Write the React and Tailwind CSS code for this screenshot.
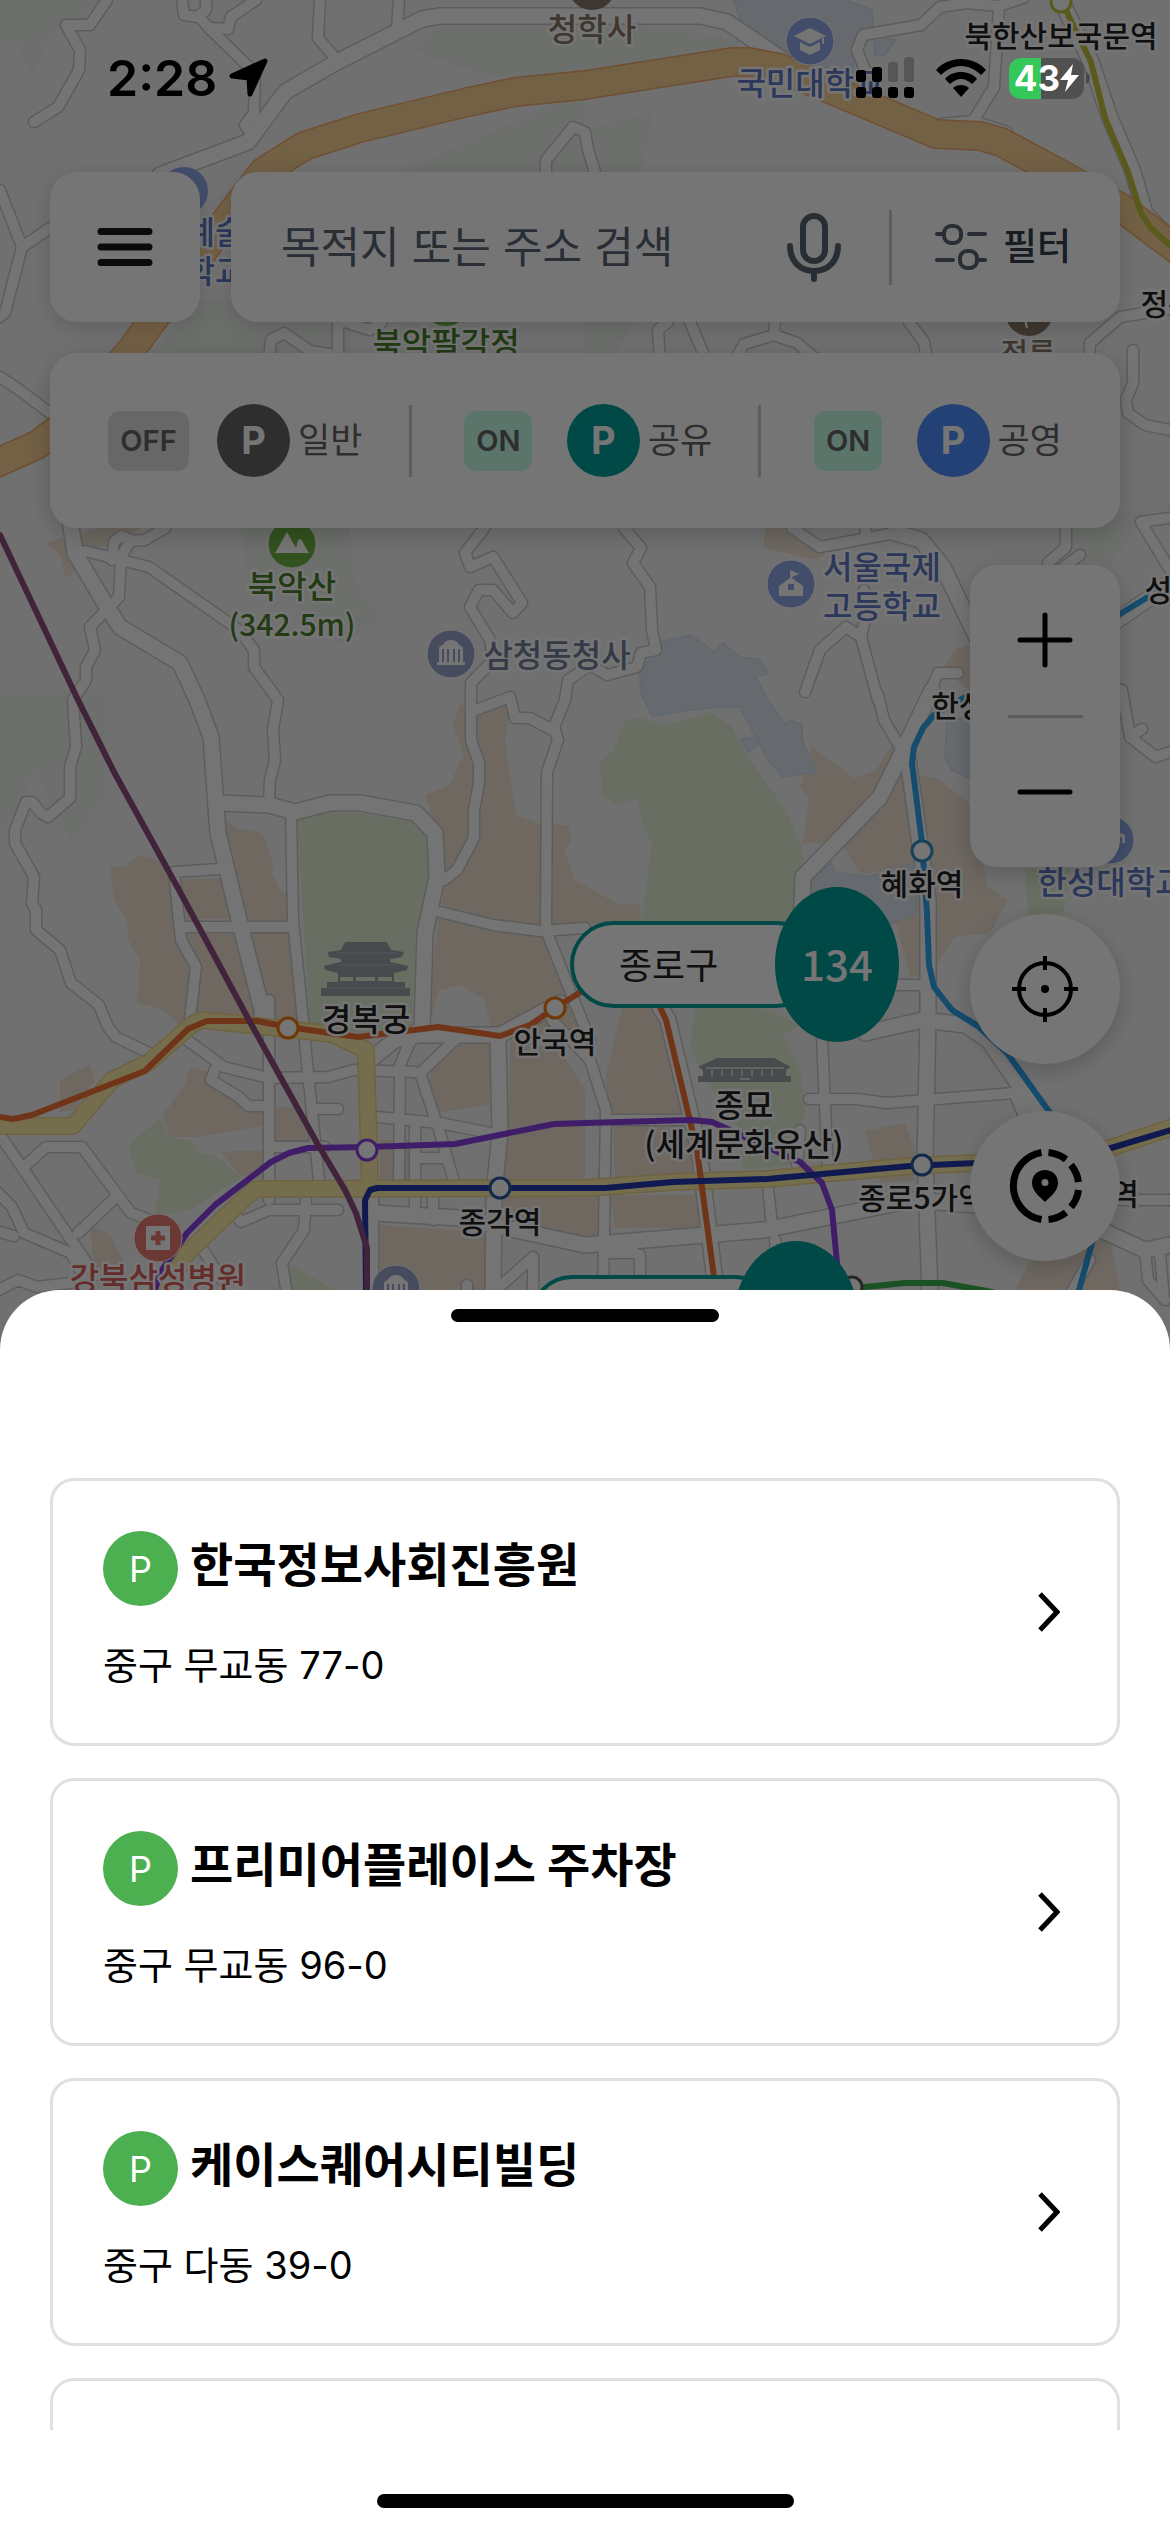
import React from "react";

const LATIN = "font-[Inter,'Noto_Sans_CJK_KR',sans-serif]";

/* ---------- map data ---------- */

const hills = [
  "M0 0H100L70 25L48 35L42 60L30 75L15 40L0 50Z",
  "M440 25L585 18L740 40L730 75L560 90L470 70L410 50Z",
  "M0 690H105V800L72 842L55 820L36 770L0 840Z",
  "M240 528H350L352 570L368 600L383 608L380 620L340 645L290 600L250 590Z",
  "M1100 511H1148L1110 565L1090 560L1066 528Z",
  "M200 300H350V353H150Z",
  "M360 190L585 90V130L655 110L640 172H500L470 353H400Z",
  "M585 322H635L615 353H585Z",
];

const beige = [
  "M45 543L100 528H140L120 545L90 548L78 570L65 578L60 555Z",
  "M765 528L800 528L825 555L815 560L795 555L763 548Z",
  "M970 645L955 650L943 670L970 690Z",
  "M110 867L125 866L139 855L165 862L174 872L196 967L190 1020L165 1010L137 1003L140 960L128 940L127 920L114 900Z",
  "M180 879L224 878L232 918L186 920Z",
  "M224 815L235 828L262 833L274 865L272 872L280 890L291 895L303 1030L262 1020L240 920Z",
  "M188 934L233 934L258 1020L198 1020L200 970Z",
  "M462 700L453 725L463 755L450 785L425 795L430 808L437 850V912L493 925L541 931L571 1000L580 1030L493 1040L485 1000L460 985L440 990L425 1035L440 905L442 880L474 838L479 780L470 740Z",
  "M476 712L510 705L505 740L516 815L541 824L541 930L493 922L442 905L445 882L474 840L480 770Z",
  "M552 824L568 826L572 838L565 850L575 880L620 905L640 903L641 923H590L546 932Z",
  "M812 747L854 778L876 770L893 743L902 773L936 778L969 803L988 887L1008 900L990 933L954 937L940 960L930 975L910 977L895 920L917 910L913 865L860 875L842 843H803L809 797L800 787Z",
  "M60 1080L90 1064L95 1080L75 1110L60 1112Z",
  "M150 1000H260V1025H205L185 1030Z",
  "M190 1067L215 1073L213 1083L245 1108L265 1110V1125L200 1137H170L163 1115L185 1083Z",
  "M276 1107H300L310 1145H276Z",
  "M220 1152L263 1150V1180L240 1175Z",
  "M445 1035L490 1037V1105L440 1112L428 1080Z",
  "M510 1040L560 1050L585 1090V1240L505 1215L500 1190L508 1130Z",
  "M380 1140H410V1180H380Z",
  "M622 1008H655L697 1150V1180H615L613 1120L605 1080Z",
  "M610 1195H695L700 1228H615Z",
  "M380 1225L490 1233V1290H380Z",
  "M585 1195H600V1235H585Z",
  "M865 1131L905 1123L915 1150V1180L880 1183Z",
  "M1085 1240L1110 1240L1120 1290H1015L1030 1262Z",
  "M90 1225L110 1235L125 1265L95 1275Z",
];

const greens = [
  "M297 818L330 813H362L414 822L427 837L429 880L416 933L412 1035L310 1030Z",
  "M600 763L613 750L626 720L641 718L667 725L710 712L732 727L745 753L786 810L803 850V925H641L652 843L643 827L637 798L617 805L602 795Z",
  "M695 1007H760L800 1025L783 1035L800 1070L806 1110L790 1165L742 1170L740 1130L712 1090L690 1050Z",
  "M128 1145L160 1118L170 1138L192 1140L197 1152L215 1155L241 1178L190 1210L155 1217L160 1180L136 1173Z",
  "M290 1264L335 1290H290Z",
  "M1025 868H1070L1063 918H1028Z",
];

const waters = [
  "M661 642L691 635L714 652L723 643L740 657L760 660L768 673L755 677L770 703L786 725L790 720L802 725V740L816 772L783 777L768 760L740 707H716L690 710L652 716L641 693L640 673Z",
  "M809 880L831 863L835 872L869 877L913 863L917 913L850 940L809 920Z",
  "M947 723L970 715V778L952 770L945 757Z",
  "M734 0L740 20L727 20L783 60L850 80L857 50L872 35L895 40L885 55H875L872 10L846 0Z",
  "M741 740L750 737L760 742L748 752Z",
];

const smallRoads = [
  "M107 0L90 25H66L80 50L79 70L58 107L34 122",
  "M182 0L184 15L197 17L206 10V0",
  "M256 0L231 17L228 29L209 28L199 17",
  "M209 28L255 73L254 113L245 125L252 135",
  "M320 0L318 38L337 60",
  "M399 0L397 28",
  "M0 190L22 247L50 228M22 247L5 313L-5 320",
  "M546 172V160L573 127L585 132L588 150L595 172",
  "M338 322V355M269 360L271 340L284 333L310 351L335 355M345 322L370 330L382 322",
  "M865 70L857 50L863 35L921 25L940 7L966 3L999 6L1025 -3",
  "M999 8L994 87L973 121L940 124M973 121L1007 132",
  "M1175 308L1120 317L1090 343L1089 360",
  "M1133 350V383L1126 400L1128 413L1145 425L1170 430",
  "M660 360L658 330L668 322M690 322L706 360M775 322L774 335L744 344L735 360M774 335L797 343L815 358M909 322L924 342L927 360",
  "M0 377L18 389L50 413",
  "M85 551L149 567L239 630L254 650V667L278 700L273 730L275 760L270 780L269 803",
  "M165 528L145 540L131 541M119 597L121 557L131 540L121 536L114 542L112 560M119 597L90 627L95 650L86 667V680L73 700L76 747L70 767V798L48 817L41 813L32 802H26L15 830V843L34 877L32 903L36 910V930L60 950L71 983L99 1005L108 1027L116 1037L153 1055",
  "M485 527L465 553L470 567L493 557L522 603L513 613L493 590H479L470 607L490 640L493 660L471 683V740L479 763V783L474 810V838L457 870L444 880",
  "M624 528L641 548L633 563L650 587L652 630L656 650L641 653L637 667L607 675L590 665L568 680L565 700L554 727L558 740L547 772L546 930L571 993L590 1040",
  "M476 710L510 697L515 718H530L552 730",
  "M220 869L174 872L181 940L196 967L190 1018",
  "M183 927H291",
  "M440 912L493 925L541 931L585 928",
  "M291 812L293 920L303 1020L308 1073L319 1180",
  "M187 1040L224 1067L269 1078L328 1077L354 1070L415 1072",
  "M269 1000V1200",
  "M216 1067L211 1080L239 1097L248 1106H269M313 1109H338M274 1147H325",
  "M0 1135L95 1275M26 1165L46 1147H82L131 1213L150 1220M116 1197L78 1233",
  "M-5 1190L12 1207L24 1233L71 1253L85 1280M0 1232L14 1236M-5 1292L18 1280L37 1287L70 1283",
  "M234 1213L241 1222L269 1210H338M306 1200L304 1230L282 1263L287 1295M200 1245L222 1280",
  "M415 1030L400 1065L399 1185M460 1035L420 1073L440 1133L455 1185M377 1117L440 1123L500 1135",
  "M415 1128V1215M420 1158H446M433 1190V1220",
  "M373 1200V1295M496 1290L533 1257V1295M467 1295V1285",
  "M552 1020L590 1060L606 1110L603 1295M613 1120H686",
  "M822 1037L828 1175M809 1099H857L887 1103L1014 1093L1028 1125M800 1130L797 1165",
  "M768 1187L772 1227M775 1240L778 1290M640 1255V1290M606 1253H635",
  "M878 695L884 720L900 747M792 528L820 547L895 533M865 528L867 538",
  "M805 692L820 650L846 627L861 637L878 700M861 637L866 615L864 590",
  "M928 697L938 673H958M1066 528V547L1048 563M1080 555L1060 570",
  "M1175 517L1141 522L1170 570M1122 690L1130 737L1156 757L1175 750M1130 737L1142 729",
  "M895 985H922M1145 1250L1148 1280L1165 1300M1120 1200H1175M1160 1255L1164 1298",
  "M1090 1260L1070 1295",
];

const bigRoads = [
  "M160 175L248 142L285 92L335 63L422 19L440 16H700L727 22L783 60",
  "M70 520L75 553L107 607L120 627L180 663L197 700L211 737L216 807L218 833L239 920L262 1010V1020",
  "M220 803L269 805L295 812L330 803H360L416 813L435 833L437 877L425 933L422 1030",
  "M895 533L921 540L943 567L978 640",
  "M932 690L902 753L880 797L803 877L801 930",
  "M908 760L928 900V1020L925 1157L930 1295",
  "M865 1033L923 1020L966 1025L988 1040L1050 1130",
  "M498 1037L500 1133L494 1193L493 1295",
  "M370 1060L395 1040L420 1035H500L560 1003",
  "M373 1213L460 1218L585 1245L645 1240L764 1230L913 1200L975 1205",
  "M1090 1225L1145 1250L1175 1244",
  "M1061 0L1091 62L1110 118L1133 172L1145 213L1170 240",
  "M1115 622L1175 580",
  "M660 1007L668 1020L699 1150L716 1290",
];

const highway =
  "M-10 466L37 445L60 428L129 353L215 235L263 172L304 146L360 128L468 102L515 92L585 85L732 62L749 62L780 68L794 74L936 134L980 136L1001 142L1057 172L1120 207L1180 252";

const yellowRoads = [
  "M-5 1126H73L112 1080L149 1062L194 1023L203 1020L332 1034L366 1050L370 1187",
  "M160 1300L187 1253L246 1197L256 1189L585 1188L673 1182L767 1179L910 1166L976 1163L1111 1148L1175 1126",
];

const subways = [
  { d: "M0 1117L13 1119L32 1115L145 1071L188 1029L207 1021H257L288 1027L358 1037L438 1027L500 1036L530 1025L555 1008L600 980L640 975L660 1007L666 1020L697 1150L714 1277", c: "#f57537" },
  { d: "M155 1290L160 1273L187 1233L215 1205L271 1162L289 1153L308 1148L368 1147L455 1144L554 1124L585 1123L691 1120L712 1122L800 1162L822 1183L832 1210L837 1263V1290", c: "#8a41e4" },
  { d: "M366 1290L365 1200L370 1190L377 1188H605L673 1182L767 1179L910 1166L976 1163L1111 1148L1175 1129", c: "#2539ae" },
  { d: "M1175 580L1148 597L1120 614L960 700L934 715L923 728L914 747L912 763L922 843L927 913L929 965L934 987L952 1010L979 1027L1007 1053L1048 1110L1100 1180L1092 1243L1079 1290", c: "#30a5ee" },
  { d: "M1061 0L1091 62L1105 118L1128 172L1141 213L1150 227L1175 250", c: "#c6c440" },
  { d: "M865 1287L905 1283H943L992 1292", c: "#3bb24c" },
  { d: "M0 535L78 700L114 772L179 890L250 1022L317 1143L345 1190L356 1213L367 1248V1290", c: "#8f4e82" },
];

const stations = [
  [288, 1028, "#f57a10"],
  [555, 1008, "#f57a10"],
  [367, 1150, "#8a41e4"],
  [500, 1188, "#2a5aa5"],
  [922, 1165, "#2a5aa5"],
  [922, 851, "#2f8fc8"],
  [1061, 2, "#c6c440"],
  [852, 1287, "#555555"],
];

const BLUE = "#5f7bc6";
const GREEN = "#4a822d";
const BLACK = "#222222";
const BROWN = "#877868";

/* name (one entry per line), x, y of the first line, colour, size */
const labels = [
  [["청학사"], 592, 27, BROWN, 32],
  [["국민대학교"], 810, 81, BLUE, 32],
  [["북한산보국문역"], 1061, 34, BLACK, 30],
  [["예술", "학교"], 215, 230, BLUE, 32],
  [["북악팔각정"], 446, 341, GREEN, 32],
  [["정릉"], 1028, 351, BROWN, 30],
  [["정릉"], 1168, 302, BLACK, 30],
  [["북악산"], 292, 584, GREEN, 32],
  [["(342.5m)"], 292, 623, GREEN, 30],
  [["삼청동청사"], 557, 653, "#757e9c", 32],
  [["서울국제", "고등학교"], 882, 565, BLUE, 32],
  [["성신"], 1172, 588, BLACK, 30],
  [["한성대입구역"], 1014, 704, BLACK, 30],
  [["혜화역"], 922, 882, BLACK, 30],
  [["한성대학교"], 1111, 880, BLUE, 32],
  [["경복궁"], 366, 1017, BLACK, 32],
  [["안국역"], 555, 1040, BLACK, 30],
  [["종묘", "(세계문화유산)"], 744, 1103, BLACK, 32],
  [["종각역"], 500, 1220, BLACK, 30],
  [["종로5가역"], 922, 1196, BLACK, 30],
  [["역"], 1125, 1192, BLACK, 30],
  [["강북삼성병원"], 158, 1276, "#d9625b", 32],
];

function Bank({ x, y }) {
  return (
    <g transform={`translate(${x} ${y})`}>
      <circle r="24" fill="#9aa7cc" stroke="#fff" strokeWidth="1" />
      <path fill="#fff" d="M-12 -5C-12 -9 -8 -8 -7 -11C-4 -15 4 -15 7 -11C8 -8 12 -9 12 -5V8H14V11H-14V8H-12Z" />
      <path stroke="#9aa7cc" strokeWidth="2" d="M-8 -5V8M-3 -5V8M3 -5V8M8 -5V8" />
    </g>
  );
}

function MapDrawing() {
  return (
    <svg
      className="absolute inset-0 h-full w-full"
      viewBox="0 0 1170 2532"
      preserveAspectRatio="xMidYMin slice"
      role="img"
      aria-label="지도"
    >
      <rect width="1170" height="2532" fill="#f5f5f5" />
      {hills.map((d) => <path key={d} d={d} fill="#ebf1e9" />)}
      {beige.map((d) => <path key={d} d={d} fill="#f0e2d4" />)}
      {greens.map((d) => <path key={d} d={d} fill="#e3f0d6" />)}
      {waters.map((d) => <path key={d} d={d} fill="#dfe8f0" stroke="#d5e1ee" strokeWidth="2" />)}
      <g fill="none" strokeLinejoin="round" strokeLinecap="round">
        <g stroke="#c9c9c9">
          {smallRoads.map((d) => <path key={d} d={d} strokeWidth="13" />)}
          {bigRoads.map((d) => <path key={d} d={d} strokeWidth="18" />)}
        </g>
        <g stroke="#fdfdfd">
          {smallRoads.map((d) => <path key={d} d={d} strokeWidth="10" />)}
          {bigRoads.map((d) => <path key={d} d={d} strokeWidth="15" />)}
        </g>
        <path d={highway} stroke="#f3ab6c" strokeWidth="30" />
        <path d={highway} stroke="#fad398" strokeWidth="27" />
        {yellowRoads.map((d) => <path key={d} d={d} stroke="#efd68c" strokeWidth="18" />)}
        {yellowRoads.map((d) => <path key={d} d={d} stroke="#fcedaa" strokeWidth="15" />)}
        {subways.map((s) => <path key={s.d} d={s.d} stroke={s.c} strokeWidth="6" />)}
      </g>
      {stations.map(([x, y, c]) => (
        <circle key={`${x}-${y}`} cx={x} cy={y} r="10" fill="#fff" stroke={c} strokeWidth="3" />
      ))}

      {/* palace */}
      <g fill="#9da1aa">
        <path d="M345 942H387L391 950L404 952L402 957L390 959V962L408 966L407 970L394 973V982H405V988H410V996H321V988H327V982H338V973L325 970L324 966L341 962V959L329 957L328 952L341 950Z" />
        <path fill="#e3f0d6" d="M340 977H353V981H340ZM356 977H375V981H356ZM378 977H392V981H378Z" />
        <path stroke="#b9bdc4" strokeWidth="1" d="M339 953H395M337 965H397M328 988H405" />
      </g>
      {/* shrine */}
      <g fill="#9da1aa">
        <path d="M717 1058H774L791 1067L786 1070V1076H791V1082H698V1076H703V1070L698 1067Z" />
        <path stroke="#d5dccf" strokeWidth="2" fill="none" d="M706 1068H784M712 1070V1076M722 1070V1076M732 1070V1076M742 1070V1076M752 1070V1076M762 1070V1076M772 1070V1076M740 1079H750" />
      </g>

      {/* points of interest */}
      <circle cx="592" cy="-14" r="24" fill={BROWN} />
      <circle cx="184" cy="191" r="24" fill="#8fa9ea" />
      <circle cx="446" cy="302" r="24" fill="#6fb04a" />
      <g transform="translate(1029 312)">
        <circle r="24" fill={BROWN} />
        <path stroke="#fff" strokeWidth="2" d="M-4 8L-2 16" />
      </g>
      <g transform="translate(810 41)">
        <circle r="24" fill="#8fa9ea" stroke="#fff" />
        <path fill="#fff" d="M0 -13L16 -5L0 3L-16 -5ZM-10 1L0 6L10 1V9L0 14L-10 9ZM12 -3H14V3H12Z" />
      </g>
      <g transform="translate(292 544)">
        <circle r="24" fill="#6db344" stroke="#fff" />
        <path fill="#fff" d="M-17 9L-5 -12L4 4L6 -4L9 -5L17 9Z" />
      </g>
      <Bank x={451} y={654} />
      <Bank x={396} y={1289} />
      <g transform="translate(791 584)">
        <circle r="24" fill="#8fa9ea" stroke="#fff" />
        <path fill="#fff" d="M-1 -14L8 -10L1 -7V-6L12 2V12H-12V2L-1 -6Z" />
        <rect x="-3" y="0" width="6" height="6" fill="#8fa9ea" />
      </g>
      <g transform="translate(1110 840)">
        <circle r="24" fill="#8fa9ea" stroke="#fff" />
        <path fill="#fff" d="M8 -8L15 -5V3H12V-3H8Z" />
      </g>
      <g transform="translate(158 1238)">
        <circle r="24" fill="#ec7a70" stroke="#fff" />
        <rect x="-12" y="-12" width="24" height="24" fill="#fff" />
        <path stroke="#ec7a70" strokeWidth="5" d="M0 -7V7M-7 0H7" />
      </g>

      <g className="font-['Noto_Sans_CJK_KR',sans-serif] font-medium" textAnchor="middle" stroke="#ffffff" strokeWidth="5" strokeLinejoin="round" paintOrder="stroke">
        {labels.map(([lines, x, y, c, s]) => (
          <text key={`${lines[0]}${x}`} y={y} fontSize={s} fill={c} dominantBaseline="central">
            {lines.map((line, i) => (
              <tspan key={line} x={x} dy={i === 0 ? 0 : 39}>{line}</tspan>
            ))}
          </text>
        ))}
      </g>
    </svg>
  );
}

function DistrictPin({ name, count, className }) {
  return (
    <button type="button" className={`absolute flex h-[155px] items-center font-['Noto_Sans_CJK_KR',sans-serif] ${className}`}>
      <span className="flex h-[87px] w-[250px] items-center rounded-full border-4 border-[#00a09a] bg-white pb-1 pl-[45px] text-4xl text-[#222]">
        {name}
      </span>
      <span className="-ml-[45px] flex h-[155px] w-[124px] items-center justify-center rounded-[50%] bg-[#00a09a] pb-1 text-[42px] font-medium text-white">
        {count}
      </span>
    </button>
  );
}

/* ---------- status bar ---------- */

function StatusBar() {
  return (
    <header className={`relative z-20 flex h-[172px] items-start justify-between pt-[57px] pr-20 pl-[107px] text-black ${LATIN}`}>
      <div className="flex h-[42px] items-center gap-3">
        <span className="text-[50px] leading-[42px] font-semibold">2:28</span>
        <svg className="h-10 w-10" viewBox="0 0 40 40" aria-label="위치">
          <path d="M3 18L36 3L21 36L20 20Z" fill="#000" stroke="#000" strokeWidth="5" strokeLinejoin="round" />
        </svg>
      </div>
      <div className="flex h-[42px] items-center">
        <svg className="h-[42px] w-[58px]" viewBox="0 0 58 42" aria-label="신호">
          <rect x="0" y="13" width="10" height="12" rx="3" />
          <rect x="16" y="10" width="10" height="15" rx="3" />
          <rect x="32" y="5" width="10" height="20" rx="3" fill="#565656" />
          <rect x="48" y="0" width="10" height="25" rx="3" fill="#565656" />
          <rect x="0" y="30" width="10" height="11" rx="3" />
          <rect x="16" y="30" width="10" height="11" rx="3" />
          <rect x="32" y="30" width="10" height="11" rx="3" />
          <rect x="48" y="30" width="10" height="11" rx="3" />
        </svg>
        <svg className="ml-[22px] h-[38px] w-[50px]" viewBox="0 0 50 38" aria-label="와이파이">
          <path d="M25 0C35 0 44 4 50 11L45 16C40 11 33 7 25 7S10 11 5 16L0 11C6 4 15 0 25 0Z" />
          <path d="M25 13C31 13 37 15 41 20L36 25C33 22 29 20 25 20S17 22 14 25L9 20C13 15 19 13 25 13Z" />
          <path d="M25 26C28 26 31 27 33 29L25 38L17 29C19 27 22 26 25 26Z" />
        </svg>
        <div className="ml-[23px] flex h-[41px] w-[75px] items-center justify-center rounded-xl bg-linear-to-r from-[#34c759] from-43% to-[#505050] to-43% text-white">
          <span className="text-[35px] leading-[41px] font-bold">43</span>
          <svg className="h-7 w-[19px]" viewBox="0 0 19 28" fill="#fff" aria-hidden="true">
            <path d="M13 0L0 16H8L5 28L19 11H11Z" />
          </svg>
        </div>
        <svg className="ml-[2px] h-3 w-1" viewBox="0 0 4 12" aria-hidden="true">
          <path d="M0 0C5 2 5 10 0 12Z" fill="#484848" />
        </svg>
      </div>
    </header>
  );
}

/* ---------- map controls ---------- */

function SearchRow() {
  return (
    <div className="flex gap-[31px]">
      <button type="button" aria-label="메뉴" className="flex h-[150px] w-[150px] shrink-0 items-center justify-center rounded-[27px] bg-white shadow-[0_6px_24px_rgba(0,0,0,0.15)]">
        <svg className="h-[38px] w-14" viewBox="0 0 56 38" stroke="#1a1a1a" strokeWidth="7" strokeLinecap="round" aria-hidden="true">
          <path d="M4 3.500H52M4 19H52M4 34.500H52" />
        </svg>
      </button>
      <div className="flex h-[150px] min-w-0 flex-1 items-center rounded-[27px] bg-white pr-[49px] pl-[50px] shadow-[0_6px_24px_rgba(0,0,0,0.15)]">
        <input
          type="text"
          aria-label="목적지 또는 주소 검색"
          placeholder="목적지 또는 주소 검색"
          className="min-w-0 flex-1 bg-transparent text-[43px] text-[#5b6475] outline-none placeholder:text-[#5b6475]"
        />
        <button type="button" aria-label="음성 검색">
          <svg className="h-[70px] w-[54px]" viewBox="0 0 54 70" fill="none" stroke="#5b6475" strokeWidth="6" strokeLinecap="round" aria-hidden="true">
            <rect x="16" y="4" width="22" height="45" rx="11" />
            <path d="M3 34C3 49 13 59 27 59S51 49 51 34M27 59V67" />
          </svg>
        </button>
        <span className="ml-12 h-[75px] w-[3px] bg-[#cacaca]" />
        <button type="button" className="ml-[43px] flex items-center gap-4 text-[37px] font-medium text-[#333f4d]">
          <svg className="h-[46px] w-[52px]" viewBox="0 0 52 46" fill="none" stroke="#5b6475" strokeWidth="4" strokeLinecap="round" aria-hidden="true">
            <rect x="9" y="2" width="17" height="17" rx="7" />
            <path d="M2 10H9M34 10H50M2 36H18M43 36H50" />
            <rect x="25" y="27" width="17" height="17" rx="7" />
          </svg>
          필터
        </button>
      </div>
    </div>
  );
}

const layers = [
  { name: "일반", on: false, dot: "bg-[#646464]" },
  { name: "공유", on: true, dot: "bg-[#00a09a]" },
  { name: "공영", on: true, dot: "bg-[#4f8ffe]" },
];

function LayerBar() {
  return (
    <div className="mt-[31px] flex h-[175px] items-center justify-between rounded-[27px] bg-white px-[58px] shadow-[0_6px_24px_rgba(0,0,0,0.2)]">
      {layers.map((l, i) => (
        <React.Fragment key={l.name}>
          {i > 0 && <span className="h-[72px] w-[3px] bg-[#cacaca]" />}
          <button type="button" aria-pressed={l.on} className="flex items-center text-[35px] text-[#646464]">
            <span className="flex w-[81px] justify-center">
              <span className={`flex h-[60px] items-center rounded-xl px-3 text-[29px] font-semibold ${l.on ? "bg-[#c6fee8]" : "bg-[#e0e0e0]"}`}>
                {l.on ? "ON" : "OFF"}
              </span>
            </span>
            <span className={`ml-7 flex h-[73px] w-[73px] items-center justify-center rounded-full text-[38px] font-bold text-white ${l.dot}`}>P</span>
            <span className="ml-2">{l.name}</span>
          </button>
        </React.Fragment>
      ))}
    </div>
  );
}

function MapButtons() {
  const round = "flex h-[150px] w-[150px] items-center justify-center rounded-full bg-white shadow-[0_6px_24px_rgba(0,0,0,0.2)]";
  return (
    <div className="mt-[37px] flex flex-col items-end gap-[47px]">
      <div className="flex h-[302px] w-[150px] flex-col items-center rounded-[27px] bg-white shadow-[0_6px_24px_rgba(0,0,0,0.2)]">
        <button type="button" aria-label="확대" className="flex w-full flex-1 items-center justify-center">
          <svg className="h-14 w-14" viewBox="0 0 56 56" stroke="#000" strokeWidth="5" strokeLinecap="round" aria-hidden="true">
            <path d="M28 3V53M3 28H53" />
          </svg>
        </button>
        <span className="h-[3px] w-[75px] bg-[#cacaca]" />
        <button type="button" aria-label="축소" className="flex w-full flex-1 items-center justify-center">
          <svg className="h-14 w-14" viewBox="0 0 56 56" stroke="#000" strokeWidth="5" strokeLinecap="round" aria-hidden="true">
            <path d="M3 28H53" />
          </svg>
        </button>
      </div>
      <button type="button" aria-label="현재 위치" className={round}>
        <svg className="h-[66px] w-[66px]" viewBox="0 0 66 66" fill="none" stroke="#000" strokeWidth="4" aria-hidden="true">
          <circle cx="33" cy="33" r="26" />
          <path d="M33 0V14M33 52V66M0 33H14M52 33H66" />
          <circle cx="33" cy="33" r="4" fill="#000" stroke="none" />
        </svg>
      </button>
      <button type="button" aria-label="주변 주차장" className={round}>
        <svg className="h-[76px] w-[76px]" viewBox="0 0 76 76" fill="none" stroke="#000" strokeWidth="7" aria-hidden="true">
          <path d="M34.500 4.500A34 34 0 0 0 34.500 71.500" />
          <path d="M41.500 4.500A34 34 0 0 1 59 11.500M64 17A34 34 0 0 1 71.500 34M71.500 42A34 34 0 0 1 64 59M59 64.500A34 34 0 0 1 41.500 71.500" />
          <path fill="#000" fillRule="evenodd" stroke="none" d="M38 22C45 22 51 27 51 35C51 43 43 49 38 54C33 49 25 43 25 35C25 27 31 22 38 22ZM38 31A3.500 3.500 0 1 0 38 38A3.500 3.500 0 1 0 38 31Z" />
        </svg>
      </button>
    </div>
  );
}

/* ---------- bottom sheet ---------- */

const lots = [
  { name: "한국정보사회진흥원", address: "중구 무교동 77-0" },
  { name: "프리미어플레이스 주차장", address: "중구 무교동 96-0" },
  { name: "케이스퀘어시티빌딩", address: "중구 다동 39-0" },
];

function LotCard({ lot }) {
  return (
    <li>
      <a href="#lot" className="flex items-center justify-between rounded-3xl border-[3px] border-[#e0e0e0] p-[50px] pr-[57px]">
        <span className="flex flex-col gap-8">
          <span className="flex h-[75px] items-center gap-3">
            <span className="flex h-[75px] w-[75px] items-center justify-center rounded-full bg-[#4caf50] text-4xl text-white">P</span>
            <span className="pb-2 text-[47px] leading-[60px] font-bold">{lot.name}</span>
          </span>
          <span className="text-[38px] leading-[55px]">{lot.address}</span>
        </span>
        <svg className="h-10 w-[22px]" viewBox="0 0 22 40" fill="none" stroke="#000" strokeWidth="5" aria-hidden="true">
          <path d="M2 2L19 20L2 38" />
        </svg>
      </a>
    </li>
  );
}

export default function App() {
  return (
    <div className={`relative isolate flex h-screen flex-col overflow-hidden bg-white text-black ${LATIN}`}>
      <div className="absolute inset-0 overflow-hidden">
        <MapDrawing />
        <DistrictPin name="종로구" count="134" className="top-[887px] left-[570px]" />
        <DistrictPin name="" count="" className="top-[1241px] left-[529px]" />
      </div>

      <StatusBar />
      <main className="relative px-[50px]">
        <SearchRow />
        <LayerBar />
        <MapButtons />
      </main>

      <div className="absolute inset-0 z-10 bg-black/54" />

      <section aria-label="주차장 목록" className="relative z-20 mt-[29px] flex min-h-0 flex-1 flex-col items-center rounded-t-[60px] bg-white pt-[19px]">
        <div className="h-[13px] w-[268px] shrink-0 rounded-full bg-black" />
        <ul className="mt-[156px] flex min-h-0 w-full flex-1 flex-col gap-8 overflow-hidden px-[50px]">
          {lots.map((lot) => <LotCard key={lot.name} lot={lot} />)}
          <li className="h-[268px] shrink-0 rounded-3xl border-[3px] border-[#e0e0e0]" />
        </ul>
        <div className="mt-16 mb-6 h-[14px] w-[417px] shrink-0 rounded-full bg-black" />
      </section>
    </div>
  );
}
